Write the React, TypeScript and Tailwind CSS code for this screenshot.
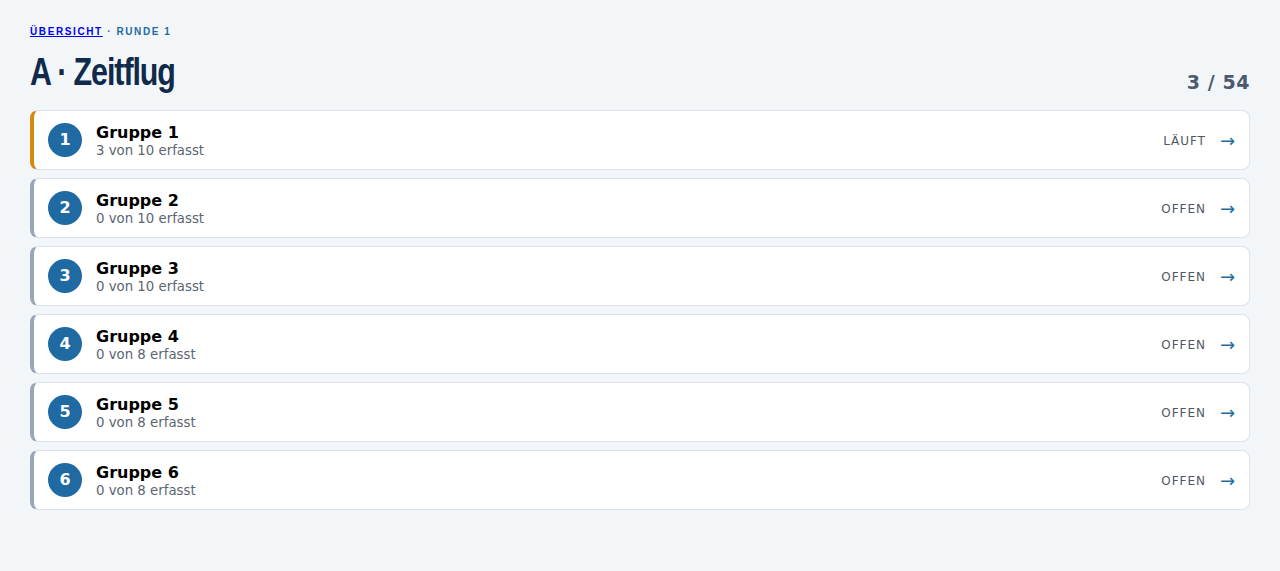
import React from 'react';

type Group = { id: number; total: number; done: number; status: 'LÄUFT' | 'OFFEN' };

const GROUPS: Group[] = [
  { id: 1, total: 10, done: 3, status: 'LÄUFT' },
  { id: 2, total: 10, done: 0, status: 'OFFEN' },
  { id: 3, total: 10, done: 0, status: 'OFFEN' },
  { id: 4, total: 8, done: 0, status: 'OFFEN' },
  { id: 5, total: 8, done: 0, status: 'OFFEN' },
  { id: 6, total: 8, done: 0, status: 'OFFEN' },
];

const GroupRow: React.FC<{ group: Group }> = ({ group }) => {
  const running = group.status === 'LÄUFT';
  return (
    <div
      className={`flex h-[60px] items-center rounded-lg border border-[#dbe2ea] border-l-4 bg-white pl-[14px] pr-[14px] ${
        running ? 'border-l-[#d4890f]' : 'border-l-[#9aa6b6]'
      }`}
    >
      <div className="flex h-[34px] w-[34px] items-center justify-center rounded-full bg-[#1f6aa3] text-[16px] font-bold text-white">
        {group.id}
      </div>
      <div className="ml-[14px] flex flex-col pt-[2px]">
        <span className="text-[16px] font-bold leading-[19px] text-black">Gruppe {group.id}</span>
        <span className="text-[13.3px] leading-[17px] text-[#5b6573]">
          {group.done} von {group.total} erfasst
        </span>
      </div>
      <div className="ml-auto flex items-center gap-[14px] pt-[2px]">
        <span className="text-[12px] tracking-[0.08em] text-[#4f5663]">{group.status}</span>
        <span className="text-[18px] leading-none text-[#1f6aa3]">→</span>
      </div>
    </div>
  );
};

const App: React.FC = () => {
  return (
    <div
      className="min-h-screen w-full bg-[#f3f6f9] px-[30px] pt-[25px]"
      style={{ fontFamily: '"DejaVu Sans", sans-serif' }}
    >
      {/* Breadcrumb */}
      <div
        className="text-[10px] font-bold uppercase leading-[14px] tracking-[0.16em]"
        style={{ fontFamily: '"Liberation Sans", Arial, sans-serif' }}
      >
        <a href="#" className="text-[#0000ee] underline">Übersicht</a>
        <span className="text-[#1f6aa3]"> · Runde 1</span>
      </div>

      {/* Title row */}
      <div className="mt-[11px] flex items-end justify-between">
        <h1
          className="origin-left scale-x-[0.8] text-[38px] font-bold leading-[44px] tracking-[-0.035em] text-[#0f2a4a]"
          style={{ fontFamily: '"Liberation Sans", Arial, sans-serif' }}
        >
          A · Zeitflug
        </h1>
        <span className="mb-[-2px] text-[19px] font-bold tracking-[0.03em] text-[#4d5a6e]">3 / 54</span>
      </div>

      {/* Group list */}
      <div className="mt-[16px] flex flex-col gap-2">
        {GROUPS.map(g => (
          <GroupRow key={g.id} group={g} />
        ))}
      </div>
    </div>
  );
};

export default App;
